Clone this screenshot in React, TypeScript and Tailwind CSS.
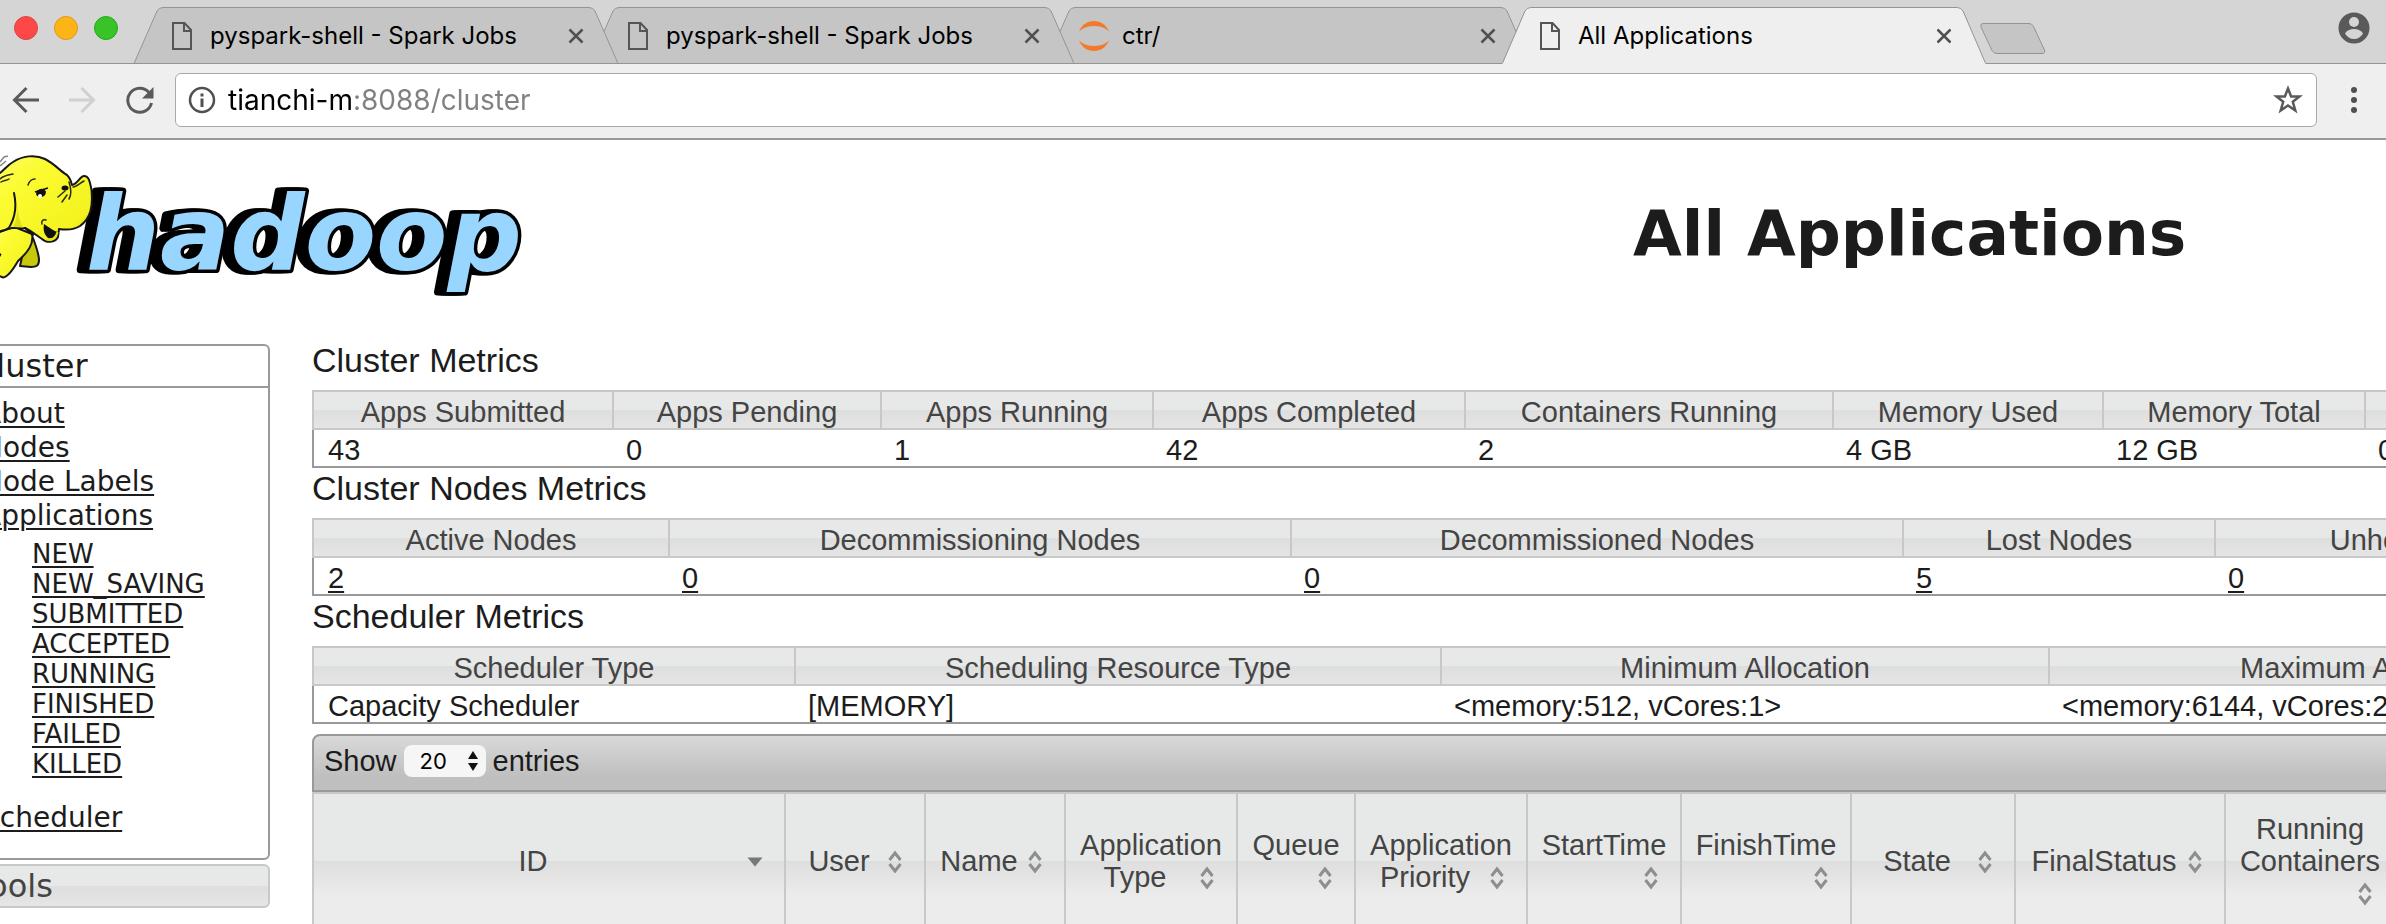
import React from "react";

const chromeFont = "font-['Inter','Noto_Sans',sans-serif]";
const bodyFont = "font-['Liberation_Sans',Arial,sans-serif]";
const navFont = "font-['DejaVu_Sans',Verdana,sans-serif]";
const headFill =
  "bg-[linear-gradient(#e7e9e8_50%,#dedede_50%,#ececec_calc(50%+36px))]";

function PageIcon() {
  return (
    <svg viewBox="0 0 20 28" className="h-7 w-5" fill="none" stroke="#555" strokeWidth="2" aria-hidden="true">
      <path d="M1 1h11.5l6.5 7v19H1z" />
      <path d="M12 1v8h7" />
    </svg>
  );
}

function JupyterIcon() {
  return (
    <svg viewBox="0 0 30 30" className="h-[30px] w-[30px]" fill="#f5792a" aria-hidden="true">
      <path d="M0 10.5C3 3.500 8.500 0 15 0s12 3.500 15 10.500C26 6.800 21 5 15 5S4 6.800 0 10.500z" />
      <path d="M0 19.500C3 26.500 8.500 30 15 30s12-3.500 15-10.500C26 23.200 21 25 15 25S4 23.200 0 19.500z" />
    </svg>
  );
}

type TabInfo = { title: string; icon: "page" | "jupyter"; active?: boolean; layer: string };

const tabs: TabInfo[] = [
  { title: "pyspark-shell - Spark Jobs", icon: "page", layer: "z-30" },
  { title: "pyspark-shell - Spark Jobs", icon: "page", layer: "z-20" },
  { title: "ctr/", icon: "jupyter", layer: "z-10" },
  { title: "All Applications", icon: "page", active: true, layer: "z-40" },
];

function Tab({ tab }: { tab: TabInfo }) {
  return (
    <div className={`relative -ml-7 flex h-[57px] w-[484px] shrink-0 items-center ${tab.layer}`}>
      <svg viewBox="0 0 484 57" className="absolute inset-0 h-full w-full" aria-hidden="true">
        {tab.active ? (
          <>
            <path d="M0 57L1 55.500 23 4Q25 .5 29 .5H455Q459 .5 461 4L483 55.500 484 57z" fill="#efefef" />
            <path d="M0 56.500L1 55 23 4Q25 .5 29 .5H455Q459 .5 461 4L483 55 484 56.500" fill="none" stroke="#949494" />
          </>
        ) : (
          <path d="M0 56.500L23 4Q25 .5 29 .5H455Q459 .5 461 4L484 56.500z" fill="#c5c5c5" stroke="#949494" />
        )}
      </svg>
      <button type="button" className="relative ml-8 flex min-w-0 flex-1 items-center gap-3 text-left">
        <span className="flex w-8 justify-center">{tab.icon === "page" ? <PageIcon /> : <JupyterIcon />}</span>
        <span className="truncate text-[24px] leading-8 text-black">{tab.title}</span>
      </button>
      <button type="button" aria-label="Close tab" className="relative mr-8 flex h-5 w-5 items-center justify-center">
        <svg viewBox="0 0 16 16" className="h-4 w-4" stroke="#505050" strokeWidth="2.500" aria-hidden="true">
          <path d="M1.500 1.500l13 13M14.500 1.500l-13 13" />
        </svg>
      </button>
    </div>
  );
}

function TabStrip() {
  return (
    <div className="flex h-16 items-end bg-[#d5d5d5] shadow-[inset_0_-1px_0_#949494]">
      <div className="flex w-[134px] shrink-0 items-center gap-4 self-start pt-4 pl-[14px]">
        <button type="button" aria-label="Close" className="h-6 w-6 rounded-full border border-[#e0443e] bg-[#fc4948]" />
        <button type="button" aria-label="Minimize" className="h-6 w-6 rounded-full border border-[#dd9a1a] bg-[#fdb417]" />
        <button type="button" aria-label="Zoom" className="h-6 w-6 rounded-full border border-[#26a81c] bg-[#38c426]" />
      </div>
      <div className="flex pl-7">
        {tabs.map((tab, i) => (
          <Tab key={i} tab={tab} />
        ))}
      </div>
      <button type="button" aria-label="New tab" className="-ml-[7px] mb-[9px]">
        <svg viewBox="0 0 68 33" className="h-[33px] w-[68px]" fill="#c5c5c5" stroke="#949494" aria-hidden="true">
          <path d="M4 1.500H50Q53 1.500 54.500 4.500L65.500 28Q66.500 31.500 63 31.500H18Q14.500 31.500 13 28.500L2 5Q1 1.500 4 1.500z" />
        </svg>
      </button>
      <button type="button" aria-label="Profile" className="mr-4 mb-5 ml-auto">
        <svg viewBox="0 0 32 32" className="h-8 w-8" aria-hidden="true">
          <circle cx="16" cy="16" r="15.500" fill="#5a5a5a" />
          <circle cx="16" cy="10" r="5" fill="#d5d5d5" />
          <path d="M7 21.500C8.500 18.500 12 17 16 17s7.500 1.500 9 4.500C23 25 20 27 16 27s-7-2-9-5.500z" fill="#d5d5d5" />
        </svg>
      </button>
    </div>
  );
}

function Toolbar() {
  return (
    <div className="flex items-center border-b-2 border-[#999] bg-[#efefef] pt-[9px] pb-[11px]">
      <button type="button" aria-label="Back" className="flex w-[52px] shrink-0 justify-center">
        <svg viewBox="0 0 28 28" className="h-7 w-7" fill="none" stroke="#5a5a5a" strokeWidth="3" aria-hidden="true">
          <path d="M27 14H3M14.500 2L2.500 14l12 12" />
        </svg>
      </button>
      <button type="button" aria-label="Forward" className="flex w-[60px] shrink-0 justify-center">
        <svg viewBox="0 0 28 28" className="h-7 w-7" fill="none" stroke="#d0d0d0" strokeWidth="3" aria-hidden="true">
          <path d="M1 14h24M13.500 2l12 12-12 12" />
        </svg>
      </button>
      <button type="button" aria-label="Reload" className="flex w-[55px] shrink-0 justify-center">
        <svg viewBox="0 0 28 28" className="h-7 w-7" aria-hidden="true">
          <path d="M23 6.500A12 12 0 1 0 25.500 17" fill="none" stroke="#5a5a5a" strokeWidth="3" />
          <path d="M27.500 1v11.500H16z" fill="#5a5a5a" />
        </svg>
      </button>
      <div className="ml-2 flex h-[54px] flex-1 items-center rounded-md border border-[#a9a9a9] bg-white pr-[13px] pl-3">
        <svg viewBox="0 0 28 28" className="h-7 w-7 shrink-0" aria-hidden="true">
          <circle cx="14" cy="14" r="12" fill="none" stroke="#505050" strokeWidth="2.500" />
          <path d="M12.500 12.500h3V21h-3zM12.500 7.500h3v3h-3z" fill="#505050" />
        </svg>
        <input
          type="text"
          aria-label="Address"
          defaultValue="tianchi-m:8088/cluster"
          className="ml-3 min-w-0 flex-1 bg-[linear-gradient(90deg,#000_126px,#808080_126px)] bg-clip-text text-[28px] leading-9 text-transparent outline-none"
        />
        <button type="button" aria-label="Bookmark this page">
          <svg viewBox="0 0 30 30" className="h-[30px] w-[30px]" fill="none" stroke="#5a5a5a" strokeWidth="2.500" aria-hidden="true">
            <path d="M15 3.500l3.100 8h8.400l-6.700 5.300 2.500 8.700-7.300-5.100-7.300 5.100 2.500-8.700L3.500 11.500h8.400z" />
          </svg>
        </button>
      </div>
      <button type="button" aria-label="Menu" className="ml-[5px] flex w-16 shrink-0 justify-center">
        <svg viewBox="0 0 8 28" className="h-7 w-2" fill="#505050" aria-hidden="true">
          <circle cx="4" cy="4" r="3" />
          <circle cx="4" cy="14" r="3" />
          <circle cx="4" cy="24" r="3" />
        </svg>
      </button>
    </div>
  );
}

function HadoopLogo() {
  return (
    <svg viewBox="0 0 540 170" className="h-[170px] w-[540px] overflow-visible" role="img" aria-label="hadoop">
      <defs>
        <linearGradient id="skin" x1="0" y1="0" x2="1" y2="1">
          <stop offset="0" stopColor="#fdfd62" />
          <stop offset="0.300" stopColor="#fbfb30" />
          <stop offset="0.800" stopColor="#f4f320" />
          <stop offset="1" stopColor="#d2d00c" />
        </linearGradient>
      </defs>
      <text
        x="86"
        y="130"
        fontSize="104"
        fill="#99d6ff"
        stroke="#000"
        strokeWidth="7"
        strokeLinejoin="round"
        className="font-['DejaVu_Sans',Verdana,sans-serif] font-bold italic [filter:drop-shadow(-3px_0_0_#000)_drop-shadow(-6px_0_0_#000)] [paint-order:stroke]"
      >
        hadoop
      </text>
      <g stroke="#16161a" strokeWidth="2" strokeLinejoin="round" strokeLinecap="round">
        <path d="M33 98C36 106 39 114 39 120 39 126 36 127 31 127L20 126 24 108z" fill="#c9c70a" />
        <path d="M-3 90L12 86 32 94C34 104 28 112 18 121 14 128 8 137 3 137.500L-3 135z" fill="url(#skin)" />
        <path d="M-3 35C4 31 6 26 13 22 22 16 35 14 45 19 55 24 61 32 67 35 70 38 71 41 72 45 78 44 80 36 84 36 89 36 90 42 91.500 50 93 66 91 78 80 86 74 90 66 90 59 89L58 97C55 103 46 103 42 99 36 95 33 92 25 88L12 88-3 92z" fill="url(#skin)" />
        <path d="M14 53C16 62 16 74 11 84 9 90 3 91-3 93" fill="none" />
        <path d="M25 88L33 95" fill="none" />
      </g>
      <path d="M16 60C18 70 17 80 13 87L24 88C20 84 18 74 16 60z" fill="#d6d414" opacity="0.700" />
      <path d="M44 84C49 87 53 91 58 92 57 96 53 99 48 98 44 94 43 90 44 84z" fill="#111" />
      <path d="M46 99C51 102 56 98 57.500 92" fill="none" stroke="#e5e312" strokeWidth="2" />
      <g fill="none" stroke="#2b2b10" strokeWidth="1.500" strokeLinecap="round">
        <path d="M28 45C29 42 31 39 35 39M42 84C41 81 43 79 46 80M69 42C71 48 72 54 69 59" />
        <path d="M58 57L65 51M62 62L67 55M73 47C77 47 80 43 84 41M0 39C4 35 8 35 13 34M1 42C4 40 6 41 9 39" />
      </g>
      <ellipse cx="41" cy="53" rx="5" ry="4" fill="#111" transform="rotate(-20 41 53)" />
      <circle cx="40" cy="56" r="2" fill="#fff" />
      <path d="M35 52l13-4" stroke="#111" strokeWidth="1.500" />
      <ellipse cx="65" cy="48" rx="3.500" ry="2.500" fill="#111" />
      <path d="M0 113l1.500 1.500L0 117z" fill="#111" />
      <path d="M0 22l4-5 4-1M0 26l6-5" fill="none" stroke="#888" strokeWidth="1.500" />
    </svg>
  );
}

const appStates = ["NEW", "NEW_SAVING", "SUBMITTED", "ACCEPTED", "RUNNING", "FINISHED", "FAILED", "KILLED"];
const navLink = "underline decoration-2 underline-offset-[3px]";

function Sidebar() {
  return (
    <aside className={`-ml-[38px] mt-1 w-[308px] text-[#1c1c1c] ${navFont}`}>
      <nav aria-label="Cluster" className="rounded-md border-2 border-[#999]">
        <h3 className="border-b-2 border-[#999] pl-[10px] text-[32px] leading-[40px]">Cluster</h3>
        <ul className="pt-[9px] pb-[23px] pl-[18px] text-[28px] leading-[34px]">
          {["About", "Nodes", "Node Labels", "Applications"].map((item) => (
            <li key={item}>
              <a href="#" className={navLink}>{item}</a>
            </li>
          ))}
          <li>
            <ul className="mt-[6px] mb-[22px] pl-[50px] text-[26px] leading-[30px]">
              {appStates.map((state) => (
                <li key={state}>
                  <a href="#" className={navLink}>{state}</a>
                </li>
              ))}
            </ul>
          </li>
          <li>
            <a href="#" className={navLink}>Scheduler</a>
          </li>
        </ul>
      </nav>
      <button type="button" className={`mt-1 block w-full rounded-md border-2 border-[#c8c8c8] pl-[10px] text-left text-[32px] leading-[40px] text-[#444] ${headFill}`}>
        Tools
      </button>
    </aside>
  );
}

type Metric = { label: string; value: string; width?: number };

const clusterMetrics: Metric[] = [
  { label: "Apps Submitted", value: "43", width: 300 },
  { label: "Apps Pending", value: "0", width: 268 },
  { label: "Apps Running", value: "1", width: 272 },
  { label: "Apps Completed", value: "42", width: 312 },
  { label: "Containers Running", value: "2", width: 368 },
  { label: "Memory Used", value: "4 GB", width: 270 },
  { label: "Memory Total", value: "12 GB", width: 262 },
  { label: "Memory Reserved", value: "0 GB" },
];

const nodeMetrics: Metric[] = [
  { label: "Active Nodes", value: "2", width: 356 },
  { label: "Decommissioning Nodes", value: "0", width: 622 },
  { label: "Decommissioned Nodes", value: "0", width: 612 },
  { label: "Lost Nodes", value: "5", width: 312 },
  { label: "Unhealthy Nodes", value: "0", width: 452 },
  { label: "Rebooted Nodes", value: "0" },
];

const schedulerMetrics: Metric[] = [
  { label: "Scheduler Type", value: "Capacity Scheduler", width: 482 },
  { label: "Scheduling Resource Type", value: "[MEMORY]", width: 646 },
  { label: "Minimum Allocation", value: "<memory:512, vCores:1>", width: 608 },
  { label: "Maximum Allocation", value: "<memory:6144, vCores:2>", width: 640 },
  { label: "Maximum Cluster Application Priority", value: "0" },
];

function MetricsTable({ title, metrics, linked }: { title: string; metrics: Metric[]; linked?: boolean }) {
  return (
    <section>
      <h3 className="h-[50px] text-[34px] leading-10">{title}</h3>
      <table className="w-full table-fixed border-separate border-spacing-0 text-[29px] leading-8">
        <colgroup>
          {metrics.map((m) => (
            <col key={m.label} style={m.width ? { width: m.width } : undefined} />
          ))}
        </colgroup>
        <thead>
          <tr>
            {metrics.map((m) => (
              <th key={m.label} scope="col" className={`border-y-2 border-l-2 border-[#c8c8c8] p-0 pt-1 font-normal text-[#444] ${headFill}`}>
                {m.label}
              </th>
            ))}
          </tr>
        </thead>
        <tbody>
          <tr>
            {metrics.map((m) => (
              <td key={m.label} className="border-b-2 border-[#999] p-0 pt-1 pl-[14px] whitespace-nowrap first:border-l-2">
                {linked ? <a href="#" className={navLink}>{m.value}</a> : m.value}
              </td>
            ))}
          </tr>
        </tbody>
      </table>
    </section>
  );
}

const appColumns = [
  { label: "ID", width: 472, sorted: true },
  { label: "User", width: 140 },
  { label: "Name", width: 140 },
  { label: "Application Type", width: 172 },
  { label: "Queue", width: 118 },
  { label: "Application Priority", width: 172 },
  { label: "StartTime", width: 154 },
  { label: "FinishTime", width: 170 },
  { label: "State", width: 164 },
  { label: "FinalStatus", width: 210 },
  { label: "Running Containers", width: 170 },
  { label: "Allocated CPU VCores" },
];

function SortIcon({ sorted }: { sorted?: boolean }) {
  return (
    <svg viewBox="0 0 32 32" className="float-right h-8 w-8" aria-hidden="true">
      {sorted ? (
        <path d="M8.500 12.500h15L16 21.500z" fill="#777" />
      ) : (
        <path d="M10.500 15l5.500-7 5.500 7M10.500 19l5.500 7 5.500-7" fill="none" stroke="#8e8e8e" strokeWidth="3" />
      )}
    </svg>
  );
}

function AppsTable() {
  return (
    <section className="mt-[10px]">
      <div className="flex h-[58px] items-center rounded-tl-lg border-2 border-[#999] bg-[linear-gradient(#d9d9d9,#bfbfbf_75%)] pb-1 pl-[10px] text-[29px] leading-8">
        <label htmlFor="page-size">Show</label>
        <span className="relative mx-[7px] inline-flex">
          <select id="page-size" defaultValue="20" className={`h-8 w-[82px] appearance-none rounded-lg bg-[#f6f6f6] pl-4 text-[22px] leading-8 text-black ${chromeFont}`}>
            <option>20</option>
            <option>40</option>
            <option>60</option>
          </select>
          <svg viewBox="0 0 12 22" className="pointer-events-none absolute top-[5px] right-[7px] h-[22px] w-3" fill="#111" aria-hidden="true">
            <path d="M6 1l5 8H1zM6 21l5-8H1z" />
          </svg>
        </span>
        <span>entries</span>
      </div>
      <table className="w-full table-fixed border-separate border-spacing-0 text-[29px] leading-8">
        <colgroup>
          {appColumns.map((c) => (
            <col key={c.label} style={c.width ? { width: c.width } : undefined} />
          ))}
        </colgroup>
        <thead>
          <tr>
            {appColumns.map((c) => (
              <th key={c.label} scope="col" className={`h-[138px] border-y-2 border-l-2 border-[#c8c8c8] px-[13px] py-0 align-middle font-normal text-[#444] ${headFill}`}>
                {c.label}
                <SortIcon sorted={c.sorted} />
              </th>
            ))}
          </tr>
        </thead>
      </table>
    </section>
  );
}

export default function App() {
  return (
    <div className={`flex h-screen flex-col overflow-hidden bg-white ${chromeFont}`}>
      <TabStrip />
      <Toolbar />
      <div className="min-h-0 flex-1 overflow-hidden">
        <div className={`grid w-[147%] grid-cols-[312px_1fr] text-[#1c1c1c] ${bodyFont}`}>
          <div className="h-[200px]">
            <HadoopLogo />
          </div>
          <h1 className={`pt-[62px] text-center text-[63px] leading-[64px] font-bold ${navFont}`}>All Applications</h1>
          <Sidebar />
          <main>
            <MetricsTable title="Cluster Metrics" metrics={clusterMetrics} />
            <MetricsTable title="Cluster Nodes Metrics" metrics={nodeMetrics} linked />
            <MetricsTable title="Scheduler Metrics" metrics={schedulerMetrics} />
            <AppsTable />
          </main>
        </div>
      </div>
    </div>
  );
}
